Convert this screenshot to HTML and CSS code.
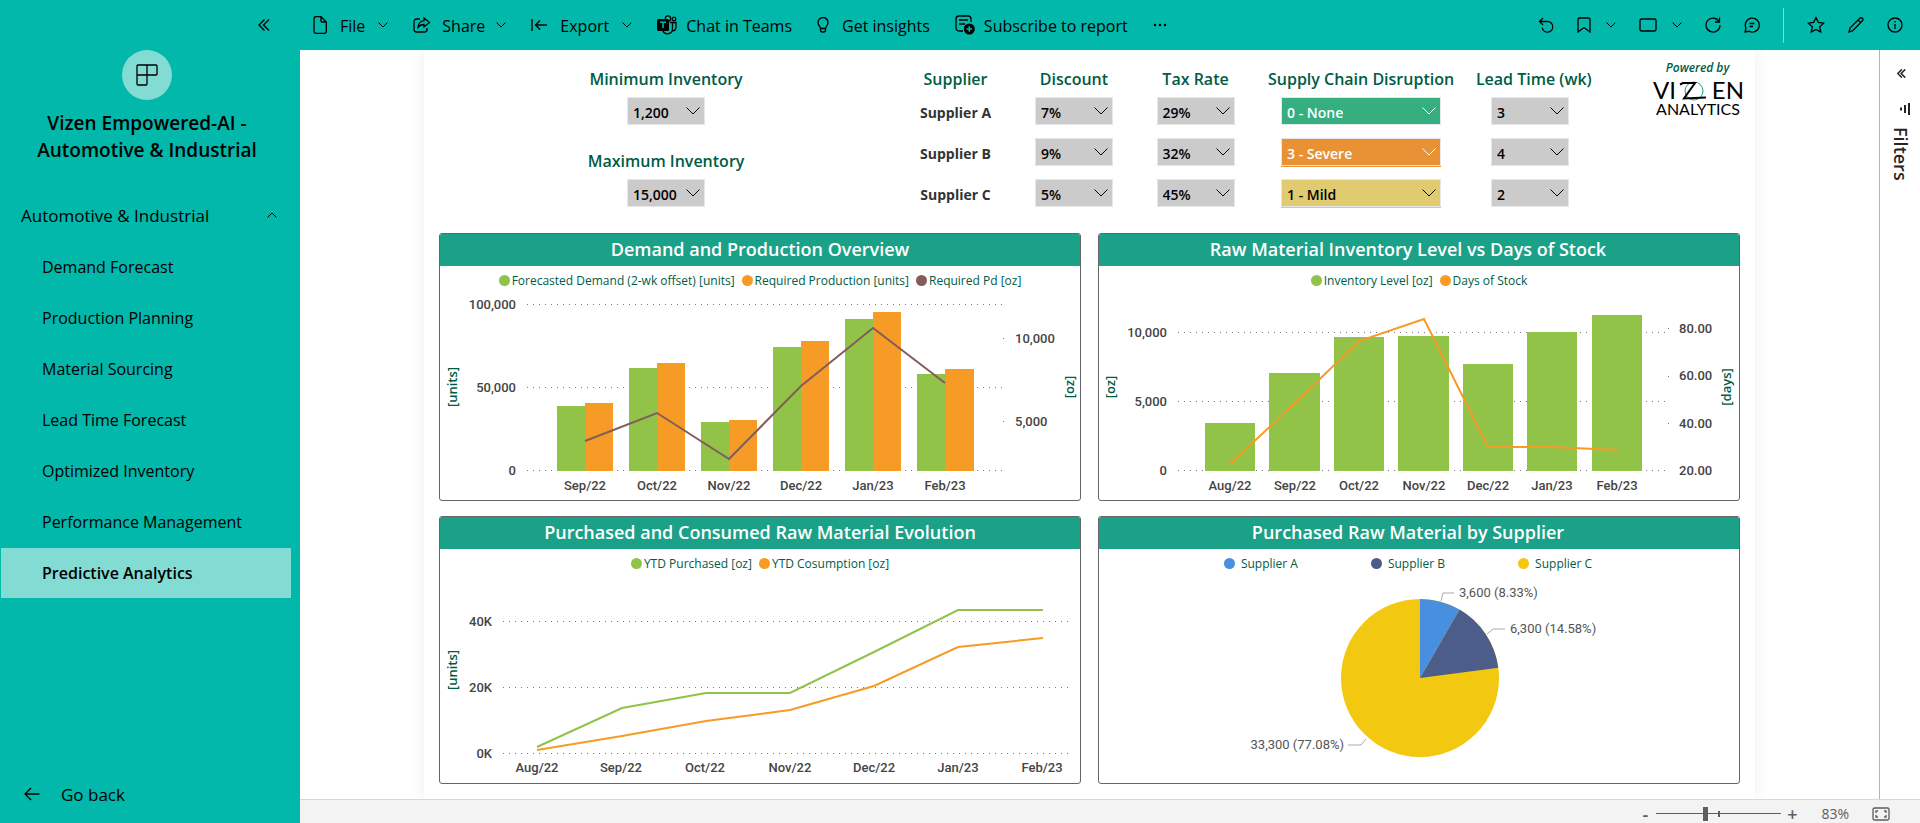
FILE: index.html
```html
<!DOCTYPE html>
<html lang="en">
<head>
<meta charset="utf-8">
<meta name="viewport" content="width=device-width, initial-scale=1">
<title>Vizen Empowered-AI - Predictive Analytics</title>
<link rel="stylesheet" href="styles.css">
</head>
<body>
<svg class="sprite" aria-hidden="true">
  <symbol id="chev" viewBox="0 0 10 6"><path d="M.5.5 5 5 9.500.5"/></symbol>
  <symbol id="chev-lg" viewBox="0 0 14 8"><path d="M.5.5 7 7 13.500.5"/></symbol>
  <symbol id="dbl" viewBox="0 0 12 12"><path d="M6.500.5 1 6l5.500 5.500M11 .5 5.500 6l5.500 5.500"/></symbol>
</svg>
<div class="app">
  <aside class="sidebar">
    <button class="icon-btn collapse" aria-label="Collapse navigation"><svg class="ico" width="12" height="12"><use href="#dbl"/></svg></button>
    <div class="app-logo"><svg class="ico" width="22" height="22" viewBox="0 0 22 22"><path d="M1 2a1 1 0 0 1 1-1h18a1 1 0 0 1 1 1v8a1 1 0 0 1-1 1h-9v9a1 1 0 0 1-1 1H2a1 1 0 0 1-1-1zM11 1v10M1 11h10"/></svg></div>
    <h1 class="app-title">Vizen Empowered-AI - Automotive &amp; Industrial</h1>
    <nav class="nav">
      <button class="nav-group" aria-expanded="true">Automotive &amp; Industrial<svg class="ico thin flip" width="10" height="6"><use href="#chev"/></svg></button>
      <a class="nav-item" href="#demand">Demand Forecast</a>
      <a class="nav-item" href="#production">Production Planning</a>
      <a class="nav-item" href="#sourcing">Material Sourcing</a>
      <a class="nav-item" href="#lead">Lead Time Forecast</a>
      <a class="nav-item" href="#inventory">Optimized Inventory</a>
      <a class="nav-item" href="#performance">Performance Management</a>
      <a class="nav-item current" href="#predictive" aria-current="page">Predictive Analytics</a>
    </nav>
    <button class="go-back"><svg class="ico" width="16" height="14" viewBox="0 0 16 14"><path d="M15.500 7H1M7 1 1 7l6 6"/></svg>Go back</button>
  </aside>

  <div class="workspace">
    <header class="topbar">
      <div class="menu">
        <button class="menu-btn"><svg class="ico" width="14" height="18" viewBox="0 0 14 18"><path d="M3 .7h5l5.300 5.300v9.300a2 2 0 0 1-2 2H3a2 2 0 0 1-2-2V2.700a2 2 0 0 1 2-2zM8 .7V5a1 1 0 0 0 1 1h4.300"/></svg><span>File</span><svg class="ico thin" width="10" height="6"><use href="#chev"/></svg></button>
        <button class="menu-btn tight"><svg class="ico" width="18" height="16" viewBox="0 0 18 16"><path d="M7 2H3.500A2.500 2.500 0 0 0 1 4.500v8A2.500 2.500 0 0 0 3.500 15h8a2.500 2.500 0 0 0 2.500-2.500V11M11 1l5.500 4.500L11 10V7.500c-2.700 0-4.500.8-6 3C5.300 6.500 7.500 4 11 3.600z"/></svg><span>Share</span><svg class="ico thin" width="10" height="6"><use href="#chev"/></svg></button>
        <button class="menu-btn"><svg class="ico" width="16" height="12" viewBox="0 0 16 12"><path d="M1 0v12M16 6H4.500M9 1.500 4.500 6 9 10.500"/></svg><span>Export</span><svg class="ico thin" width="10" height="6"><use href="#chev"/></svg></button>
        <button class="menu-btn close"><svg class="ico" width="20" height="20" viewBox="0 0 20 20"><circle cx="11" cy="3.500" r="2.700"/><circle cx="17" cy="4" r="1.800"/><path d="M13 7.500h2.500v6.500a5 5 0 0 1-9.500 2M15.500 7.500H19v5a3.200 3.200 0 0 1-3.600 3.200"/><rect class="solid" x="0" y="4" width="12" height="12" rx="1.500"/><path class="teal" d="M3 7.300h6M6 7.300V13"/></svg><span>Chat in Teams</span></button>
        <button class="menu-btn"><svg class="ico" width="12" height="16" viewBox="0 0 12 16"><path d="M3.500 11.500C3.500 9.500 1 8.500 1 5.500a5 5 0 0 1 10 0c0 3-2.500 4-2.500 6zM3.500 11.500V13a2 2 0 0 0 2 2h1a2 2 0 0 0 2-2v-1.500"/></svg><span>Get insights</span></button>
        <button class="menu-btn close"><svg class="ico" width="20" height="20" viewBox="0 0 20 20"><path d="M8 16H4a3 3 0 0 1-3-3V4a3 3 0 0 1 3-3h9a3 3 0 0 1 3 3v3M4 5h9M4 9h6"/><circle class="solid" cx="14.300" cy="14" r="5.500"/><path class="teal" d="M11.500 14h5.600M14.300 11.200v5.600"/></svg><span>Subscribe to report</span></button>
        <button class="menu-btn" aria-label="More options"><svg width="14" height="4" viewBox="0 0 14 4"><circle cx="2" cy="2" r="1.200"/><circle cx="7" cy="2" r="1.200"/><circle cx="12" cy="2" r="1.200"/></svg></button>
      </div>
      <div class="tools">
        <button class="icon-btn" aria-label="Reset"><svg class="ico" width="16" height="16" viewBox="0 0 16 16"><path d="M1.500 4.500h8a5.300 5.300 0 1 1-5.300 6.200M5 1 1.500 4.500 5 8"/></svg></button>
        <button class="icon-btn pair" aria-label="Bookmarks"><svg class="ico" width="14" height="16" viewBox="0 0 14 16"><path d="M1 15V2.500A1.500 1.500 0 0 1 2.500 1h9A1.500 1.500 0 0 1 13 2.500V15l-6-4.500z"/></svg><svg class="ico thin" width="10" height="6"><use href="#chev"/></svg></button>
        <button class="icon-btn pair" aria-label="View"><svg class="ico" width="18" height="14" viewBox="0 0 18 14"><rect x="1" y="1" width="16" height="12" rx="1.500"/></svg><svg class="ico thin" width="10" height="6"><use href="#chev"/></svg></button>
        <button class="icon-btn" aria-label="Refresh"><svg class="ico" width="16" height="16" viewBox="0 0 16 16"><path d="M14 4.500A7 7 0 1 0 15 8M14.500.5v4.500H10"/></svg></button>
        <button class="icon-btn" aria-label="Comments"><svg class="ico" width="16" height="16" viewBox="0 0 16 16"><path d="M1 15l1-3.800A7 7 0 1 1 5 14.300zM5.500 6.500h5M5.500 9.500h3.500"/></svg></button>
        <span class="divider"></span>
        <button class="icon-btn" aria-label="Favorite"><svg class="ico" width="18" height="18" viewBox="0 0 18 18"><path d="m9 1.500 2.300 4.900 5.300.7-3.900 3.700 1 5.300L9 13.500l-4.700 2.600 1-5.300L1.400 7.100l5.300-.7z"/></svg></button>
        <button class="icon-btn" aria-label="Edit"><svg class="ico" width="16" height="16" viewBox="0 0 16 16"><path d="M1 15l1-4L11.800 1.300a1.700 1.700 0 0 1 2.600 0 1.700 1.700 0 0 1 0 2.500L4.800 13.700zM10 3l2.800 2.800"/></svg></button>
        <button class="icon-btn" aria-label="Information"><svg class="ico" width="16" height="16" viewBox="0 0 16 16"><circle cx="8" cy="8" r="7"/><path d="M8 7v5M8 4v1.500"/></svg></button>
      </div>
    </header>

    <div class="body">
      <main class="stage">
        <div class="report">
          <section class="controls">
            <div class="inventory">
              <label for="min-inv">Minimum Inventory</label>
              <div class="pick"><select id="min-inv"><option>1,200</option></select><svg class="ico" width="14" height="8"><use href="#chev-lg"/></svg></div>
              <label class="second" for="max-inv">Maximum Inventory</label>
              <div class="pick"><select id="max-inv"><option>15,000</option></select><svg class="ico" width="14" height="8"><use href="#chev-lg"/></svg></div>
            </div>
            <table class="suppliers">
              <colgroup><col class="c-name"><col class="c-disc"><col class="c-tax"><col class="c-risk"><col class="c-lead"></colgroup>
              <thead><tr><th scope="col">Supplier</th><th scope="col">Discount</th><th scope="col">Tax Rate</th><th scope="col">Supply Chain Disruption</th><th scope="col">Lead Time (wk)</th></tr></thead>
              <tbody>
                <tr><th scope="row">Supplier A</th>
                  <td><div class="pick"><select aria-label="Supplier A discount"><option>7%</option></select><svg class="ico" width="14" height="8"><use href="#chev-lg"/></svg></div></td>
                  <td><div class="pick"><select aria-label="Supplier A tax rate"><option>29%</option></select><svg class="ico" width="14" height="8"><use href="#chev-lg"/></svg></div></td>
                  <td><div class="pick wide none"><select aria-label="Supplier A disruption"><option>0 - None</option></select><svg class="ico" width="14" height="8"><use href="#chev-lg"/></svg></div></td>
                  <td><div class="pick"><select aria-label="Supplier A lead time"><option>3</option></select><svg class="ico" width="14" height="8"><use href="#chev-lg"/></svg></div></td></tr>
                <tr><th scope="row">Supplier B</th>
                  <td><div class="pick"><select aria-label="Supplier B discount"><option>9%</option></select><svg class="ico" width="14" height="8"><use href="#chev-lg"/></svg></div></td>
                  <td><div class="pick"><select aria-label="Supplier B tax rate"><option>32%</option></select><svg class="ico" width="14" height="8"><use href="#chev-lg"/></svg></div></td>
                  <td><div class="pick wide severe"><select aria-label="Supplier B disruption"><option>3 - Severe</option></select><svg class="ico" width="14" height="8"><use href="#chev-lg"/></svg></div></td>
                  <td><div class="pick"><select aria-label="Supplier B lead time"><option>4</option></select><svg class="ico" width="14" height="8"><use href="#chev-lg"/></svg></div></td></tr>
                <tr><th scope="row">Supplier C</th>
                  <td><div class="pick"><select aria-label="Supplier C discount"><option>5%</option></select><svg class="ico" width="14" height="8"><use href="#chev-lg"/></svg></div></td>
                  <td><div class="pick"><select aria-label="Supplier C tax rate"><option>45%</option></select><svg class="ico" width="14" height="8"><use href="#chev-lg"/></svg></div></td>
                  <td><div class="pick wide mild"><select aria-label="Supplier C disruption"><option>1 - Mild</option></select><svg class="ico" width="14" height="8"><use href="#chev-lg"/></svg></div></td>
                  <td><div class="pick"><select aria-label="Supplier C lead time"><option>2</option></select><svg class="ico" width="14" height="8"><use href="#chev-lg"/></svg></div></td></tr>
              </tbody>
            </table>
            <div class="brand">
              <span class="powered">Powered by</span>
              <svg class="brand-logo" width="92" height="36" viewBox="0 0 92 36" role="img" aria-label="Vizen Analytics">
                <circle cx="42" cy="10" r="9" fill="none" stroke="#1aa187"/>
                <text x="1" y="18" font-size="24">VI</text>
                <path d="M28 3.500 31 2h12L32 17.500l22-1" fill="none" stroke="#000" stroke-width="2"/>
                <text x="92" y="18" font-size="24" text-anchor="end">EN</text>
                <text x="46" y="34" font-size="16" text-anchor="middle">ANALYTICS</text>
              </svg>
            </div>
          </section>

          <section class="charts">
            <article class="card">
              <h2>Demand and Production Overview</h2>
              <ul class="legend"><li><i class="dot green"></i>Forecasted Demand (2-wk offset) [units]</li><li><i class="dot orange"></i>Required Production [units]</li><li><i class="dot brown"></i>Required Pd [oz]</li></ul>
              <svg class="plot" viewBox="0 0 640 204">
                <path class="grid" d="M87 8.500H564M87 91.500H564M87 174.500H564M563 42.500h1M563 125.500h1"/>
                <g class="f-green"><rect x="117" y="110" width="28" height="65"/><rect x="189" y="72" width="28" height="103"/><rect x="261" y="126" width="28" height="49"/><rect x="333" y="51" width="28" height="124"/><rect x="405" y="23" width="28" height="152"/><rect x="477" y="78" width="28" height="97"/></g>
                <g class="f-orange"><rect x="145" y="107" width="28" height="68"/><rect x="217" y="67" width="28" height="108"/><rect x="289" y="124" width="28" height="51"/><rect x="361" y="45" width="28" height="130"/><rect x="433" y="16" width="28" height="159"/><rect x="505" y="73" width="29" height="102"/></g>
                <path class="line s-brown" d="M145 145 217 117 289 163 361 90 433 32 505 87"/>
                <g class="end"><text x="76" y="13">100,000</text><text x="76" y="96">50,000</text><text x="76" y="179">0</text></g>
                <g><text x="575" y="47">10,000</text><text x="575" y="130">5,000</text></g>
                <g class="mid"><text x="145" y="194">Sep/22</text><text x="217" y="194">Oct/22</text><text x="289" y="194">Nov/22</text><text x="361" y="194">Dec/22</text><text x="433" y="194">Jan/23</text><text x="505" y="194">Feb/23</text></g>
                <g class="axis"><text transform="translate(17 91) rotate(-90)">[units]</text><text transform="translate(634 91) rotate(-90)">[oz]</text></g>
              </svg>
            </article>

            <article class="card right">
              <h2>Raw Material Inventory Level vs Days of Stock</h2>
              <ul class="legend"><li><i class="dot green"></i>Inventory Level [oz]</li><li><i class="dot orange"></i>Days of Stock</li></ul>
              <svg class="plot" viewBox="0 0 640 204">
                <path class="grid" d="M79 36.500H571M79 105.500H571M79 174.500H571M569 32.500h1M569 80.500h1M569 127.500h1"/>
                <g class="f-green"><rect x="106" y="127" width="50" height="48"/><rect x="170" y="77" width="51" height="98"/><rect x="235" y="41" width="50" height="134"/><rect x="299" y="40" width="51" height="135"/><rect x="364" y="68" width="50" height="107"/><rect x="428" y="36" width="50" height="139"/><rect x="493" y="19" width="50" height="156"/></g>
                <path class="line s-orange" d="M131 168 196 107 260 45 325 23 389 151 453 151 518 154"/>
                <g class="end"><text x="68" y="41">10,000</text><text x="68" y="110">5,000</text><text x="68" y="179">0</text></g>
                <g><text x="580" y="37">80.00</text><text x="580" y="84">60.00</text><text x="580" y="132">40.00</text><text x="580" y="179">20.00</text></g>
                <g class="mid"><text x="131" y="194">Aug/22</text><text x="196" y="194">Sep/22</text><text x="260" y="194">Oct/22</text><text x="325" y="194">Nov/22</text><text x="389" y="194">Dec/22</text><text x="453" y="194">Jan/23</text><text x="518" y="194">Feb/23</text></g>
                <g class="axis"><text transform="translate(16 91) rotate(-90)">[oz]</text><text transform="translate(632 91) rotate(-90)">[days]</text></g>
              </svg>
            </article>

            <article class="card">
              <h2>Purchased and Consumed Raw Material Evolution</h2>
              <ul class="legend"><li><i class="dot green"></i>YTD Purchased [oz]</li><li><i class="dot orange"></i>YTD Cosumption [oz]</li></ul>
              <svg class="plot" viewBox="0 0 640 204">
                <path class="grid" d="M63 42.500H633M63 108.500H633M63 174.500H633"/>
                <path class="line s-green" d="M97 168 182 129 266 114H350L434 73 518 31H603"/>
                <path class="line s-orange" d="M97 171 182 157 266 142 350 131 434 107 518 68 603 59"/>
                <g class="end"><text x="52" y="47">40K</text><text x="52" y="113">20K</text><text x="52" y="179">0K</text></g>
                <g class="mid"><text x="97" y="193">Aug/22</text><text x="181" y="193">Sep/22</text><text x="265" y="193">Oct/22</text><text x="350" y="193">Nov/22</text><text x="434" y="193">Dec/22</text><text x="518" y="193">Jan/23</text><text x="602" y="193">Feb/23</text></g>
                <g class="axis"><text transform="translate(17 91) rotate(-90)">[units]</text></g>
              </svg>
            </article>

            <article class="card right">
              <h2>Purchased Raw Material by Supplier</h2>
              <ul class="legend spread"><li><i class="dot blue"></i>Supplier A</li><li><i class="dot navy"></i>Supplier B</li><li><i class="dot yellow"></i>Supplier C</li></ul>
              <svg class="plot" viewBox="0 0 640 204">
                <circle class="f-yellow" cx="321" cy="99" r="79"/>
                <path class="f-navy" d="M321 99 360.500 30.600A79 79 0 0 1 399.300 88.700z"/>
                <path class="f-blue" d="M321 99V20A79 79 0 0 1 360.500 30.600z"/>
                <path class="lead" d="M342 22l2-8h11M388 55l6-5h12M267 160l-5 6h-13"/>
                <g class="note"><text x="360" y="18">3,600 (8.33%)</text><text x="411" y="54">6,300 (14.58%)</text><text class="end" x="245" y="170">33,300 (77.08%)</text></g>
              </svg>
            </article>
          </section>
        </div>
      </main>
      <aside class="filters">
        <button class="icon-btn" aria-label="Expand filters"><svg class="ico bold" width="9" height="9"><use href="#dbl"/></svg></button>
        <svg class="ico filter-mark" width="10" height="12" viewBox="0 0 10 12"><path d="M9 0v12M5 2v8M1 4.500v3"/></svg>
        <h2>Filters</h2>
      </aside>
    </div>

    <footer class="status">
      <button class="step" aria-label="Zoom out">-</button>
      <input class="zoom" type="range" min="10" max="200" value="83" aria-label="Zoom level">
      <button class="step" aria-label="Zoom in">+</button>
      <output class="pct">83%</output>
      <button class="icon-btn fit" aria-label="Fit to page"><svg class="ico" width="18" height="14" viewBox="0 0 18 14"><rect x="1" y="1" width="16" height="12" rx="1.500"/><path d="M4 6V4h2M12 4h2v2M14 8v2h-2M6 10H4V8"/></svg></button>
    </footer>
  </div>
</div>
</body>
</html>
```
FILE: styles.css
```css
:root {
  --teal: #01b8aa;
  --teal-soft: #82dcd4;
  --head: #1aa187;
  --ink: #005c46;
  --green: #90c348;
  --orange: #f59b26;
  --brown: #845c5c;
  --ui: "Open Sans", "Noto Sans", sans-serif;
}
* { box-sizing: border-box; }
body { margin: 0; font-family: var(--ui); color: #000; background: #fff; }
button { border: 0; padding: 0; background: none; color: inherit; font: inherit; cursor: pointer; }
h1, h2, ul { margin: 0; padding: 0; }
.sprite { display: none; }
.ico { fill: none; stroke: currentColor; stroke-width: 1.3; flex: none; }
.ico .solid { fill: #000; stroke: none; }
.ico .teal { stroke: var(--teal); stroke-width: 1.6; }
.thin { stroke-width: 1; }
.flip { transform: rotate(180deg); }
.bold { stroke-width: 2; }
.icon-btn { display: flex; align-items: center; justify-content: center; }

.app { display: flex; min-height: 100vh; }
.workspace { flex: 1; min-width: 0; display: flex; flex-direction: column; }

/* Navigation */
.sidebar { width: 300px; flex: none; background: var(--teal); display: flex; flex-direction: column; align-items: center; padding-bottom: 10px; }
.collapse { align-self: flex-end; width: 72px; height: 50px; }
.app-logo { width: 50px; height: 50px; margin-right: 6px; border-radius: 50%; background: var(--teal-soft); display: grid; place-items: center; }
.app-title { width: 250px; margin: 10px 6px 0 0; text-align: center; font-size: 19px; line-height: 27px; font-weight: 600; }
.nav { align-self: stretch; margin-top: 25px; display: grid; gap: 1px; font-size: 16px; }
.nav-group { height: 52px; padding: 0 23px 0 21px; display: flex; align-items: center; justify-content: space-between; text-align: left; font-size: 17px; }
.nav-item { height: 50px; margin: 0 9px 0 1px; padding-left: 41px; display: flex; align-items: center; color: #000; text-decoration: none; }
.current { background: var(--teal-soft); font-weight: 600; }
.go-back { margin-top: auto; align-self: stretch; height: 38px; padding-left: 24px; display: flex; align-items: center; gap: 21px; font-size: 17px; }

/* Command bar */
.topbar { height: 50px; background: var(--teal); display: flex; justify-content: space-between; padding: 0 17px 0 13px; }
.menu, .tools { display: flex; align-items: center; }
.menu { gap: 25px; font-size: 16px; white-space: nowrap; }
.menu-btn { height: 50px; display: flex; align-items: center; gap: 13px; }
.menu-btn span { padding-top: 2px; }
.tight { gap: 11px; }
.close { gap: 9px; }
.tools { gap: 23px; }
.pair { gap: 15px; }
.divider { width: 1px; height: 35px; background: #80dbd4; }

/* Report */
.body { flex: 1; display: flex; }
.stage { flex: 1; min-width: 0; padding: 0 124px; overflow: hidden; }
.report { height: 100%; padding: 17px 15px 15px; background: #fff; box-shadow: 0 0 14px rgba(0, 0, 0, .08); }
.controls { display: grid; grid-template-columns: 469fr 676fr 171fr; margin-bottom: 19px; margin-right: -15px; }
.inventory { display: flex; flex-direction: column; align-items: center; padding-right: 15px; }
.inventory label, .suppliers thead th { font-size: 16px; line-height: 24px; font-weight: 600; color: var(--ink); white-space: nowrap; }
.inventory .pick { margin-top: 6px; }
.inventory .second { margin-top: 24px; }
.suppliers { width: 100%; table-layout: fixed; border-collapse: collapse; }
.suppliers th, .suppliers td { padding: 0; text-align: center; vertical-align: top; }
.suppliers thead th { height: 24px; }
.suppliers tbody th { padding-top: 8px; font-size: 14px; line-height: 28px; font-weight: 700; color: #333; }
.suppliers td { height: 41px; padding-top: 6px; }
.c-name { width: 95px; }
.c-disc { width: 21%; }
.c-tax { width: 15%; }
.c-risk { width: 34%; }
.c-lead { width: 16%; }
.pick { --fill: #cbcbcb; display: grid; width: 78px; height: 28px; margin: 0 auto; }
.pick > * { grid-area: 1 / 1; }
.pick select { appearance: none; width: 100%; border: 1px solid #e6e6e6; border-radius: 0; padding: 3px 5px 0; background: var(--fill); color: inherit; font: 600 14px var(--ui); }
.pick .ico { align-self: center; justify-self: end; margin-right: 5px; pointer-events: none; stroke-width: 1; }
.wide { width: 160px; }
.none { --fill: #35ae80; color: #fff; }
.severe { --fill: #e89235; color: #fff; }
.mild { --fill: #e0cb70; }
.severe select, .mild select { box-shadow: 0 1px 0 var(--fill); }
.brand { display: flex; flex-direction: column; align-items: center; justify-self: end; width: 115px; margin-top: -8px; }
.powered { font-size: 12px; line-height: 18px; font-style: italic; font-weight: 600; color: var(--ink); }
.brand-logo { margin-top: 4px; overflow: visible; font-family: Lato, sans-serif; }

.charts { display: grid; grid-template-columns: 1fr 1fr; gap: 15px 17px; }
.card { border: 1px solid #666; border-radius: 3px; background: #fff; overflow: hidden; }
.card h2 { height: 32px; background: var(--head); color: #fff; text-align: center; font-size: 18px; line-height: 30px; font-weight: 600; }
.right h2 { padding-right: 22px; }
.legend { height: 30px; padding-bottom: 2px; display: flex; justify-content: center; align-items: center; gap: 7px; list-style: none; font-size: 12px; color: var(--ink); }
.legend li { display: flex; align-items: center; gap: 2px; }
.legend.spread { gap: 73px; padding-right: 22px; }
.spread li { gap: 6px; }
.dot { width: 11px; height: 11px; border-radius: 50%; }
.green { background: var(--green); }
.orange { background: var(--orange); }
.brown { background: var(--brown); }
.blue { background: #488fdf; }
.navy { background: #4b5d88; }
.yellow { background: #f2c811; }
.plot { display: block; width: 100%; height: auto; font: 500 13px Roboto, sans-serif; fill: #444; }
.grid { fill: none; stroke: #777; stroke-dasharray: 1 5; }
.line { fill: none; stroke-width: 2; }
.s-green { stroke: var(--green); }
.s-orange { stroke: var(--orange); }
.s-brown { stroke: var(--brown); }
.f-green { fill: var(--green); }
.f-orange { fill: var(--orange); }
.f-blue { fill: #488fdf; }
.f-navy { fill: #4b5d88; }
.f-yellow { fill: #f2c811; }
.end { text-anchor: end; }
.mid, .axis { text-anchor: middle; }
.axis { font: 600 13px var(--ui); fill: var(--ink); }
.note { font-weight: 400; fill: #555; }
.lead { fill: none; stroke: #aaa; }

/* Filters rail */
.filters { width: 41px; flex: none; border-left: 1px solid #b3b3b3; display: flex; flex-direction: column; align-items: center; padding: 19px 0 0 2px; color: #252423; }
.filter-mark { margin: 25px 0 12px 8px; stroke-width: 2; }
.filters h2 { writing-mode: vertical-rl; font-size: 18px; line-height: 24px; font-weight: 600; }

/* Zoom bar */
.status { height: 24px; border-top: 1px solid #d8d8d8; background: #f3f3f3; display: flex; justify-content: flex-end; align-items: center; padding: 4px 30px 0 0; color: #605e5c; }
.step { width: 14px; font-size: 18px; line-height: 18px; font-weight: 600; }
.zoom { appearance: none; width: 125px; height: 14px; margin: 0 4px; background: linear-gradient(#605e5c, #605e5c) 62px 50% / 2px 6px no-repeat, linear-gradient(#605e5c, #605e5c) 0 50% / 100% 1px no-repeat; }
.zoom::-webkit-slider-thumb { appearance: none; width: 5px; height: 14px; background: #605e5c; }
.pct { margin: 0 23px 0 22px; font-size: 14px; line-height: 18px; }
```
